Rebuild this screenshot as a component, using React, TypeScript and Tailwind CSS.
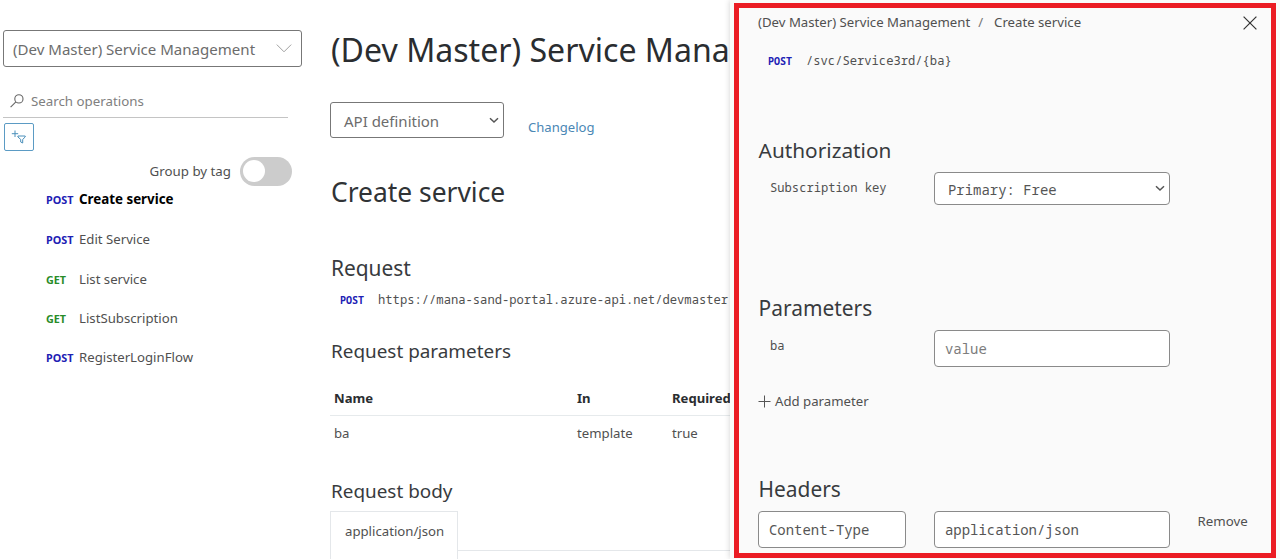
import type { ReactNode } from 'react';

type Method = 'POST' | 'GET';

const operations: { method: Method; name: string; active?: boolean }[] = [
  { method: 'POST', name: 'Create service', active: true },
  { method: 'POST', name: 'Edit Service' },
  { method: 'GET', name: 'List service' },
  { method: 'GET', name: 'ListSubscription' },
  { method: 'POST', name: 'RegisterLoginFlow' },
];

const mono = "font-['Noto_Sans_Mono','DejaVu_Sans_Mono',monospace]";

function SmallChevron({ className }: { className: string }) {
  return (
    <svg viewBox="0 0 10 7" className={className} fill="none" stroke="#555" strokeWidth="1.5">
      <path d="M1 1.3 L5 5 L9 1.3" />
    </svg>
  );
}

function MonoBadge() {
  return <span className="w-[38px] shrink-0 text-[10px] font-bold text-[#2020b4]">POST</span>;
}

function Field({ className, children }: { className: string; children: ReactNode }) {
  return (
    <div className={`flex shrink-0 items-center rounded-[4px] border border-[#8a8a8a] bg-white text-[13.95px] leading-[20px] text-[#555] ${mono} ${className}`}>
      {children}
    </div>
  );
}

function Sidebar() {
  return (
    <aside className="flex h-full w-[330px] shrink-0 flex-col pl-[3px] pt-[30px]">
      <div className="flex h-[37px] w-[299px] items-center justify-between rounded-[3px] border border-[#777] pl-[9px] pr-[9px] text-[15.05px] text-[#6c6c6c]">
        <span className="whitespace-nowrap pt-px">(Dev Master) Service Management</span>
        <svg viewBox="0 0 16 9" className="h-[9px] w-4" fill="none" stroke="#a0a0a0" strokeWidth="1">
          <path d="M0.8 0.6 L8 7.8 L15.2 0.6" />
        </svg>
      </div>

      <div className="mt-[17px] flex h-[34px] w-[285px] items-center border-b border-[#c4c4c4] pl-[7px] text-[13.3px] text-[#808080]">
        <svg viewBox="0 0 14 14" className="h-[14px] w-[14px]" fill="none" stroke="#666" strokeWidth="1.1">
          <circle cx="8.9" cy="4.9" r="4.1" />
          <path d="M5.9 7.9 L0.6 13.2" />
        </svg>
        <span className="ml-[7px] pt-[2px]">Search operations</span>
      </div>

      <div className="ml-px mt-[5px] flex h-[28px] w-[30px] items-center justify-center rounded-[2px] border border-[#5b9bc4]">
        <svg viewBox="0 0 16 16" className="h-4 w-4" fill="none" stroke="#4a8fba" strokeWidth="1">
          <path d="M4 1.5 V8 M0.8 4.7 H7.2" />
          <path d="M6.9 7 H14.2 V8 L11.7 10.4 V14 L9.7 13 V10.4 L6.9 8 Z" />
        </svg>
      </div>

      <div className="mt-[5px] flex h-[30px] w-[289px] items-center justify-end text-[13.3px] text-[#505050]">
        <span className="pt-px">Group by tag</span>
        <div className="ml-[9px] flex h-[29px] w-[52px] items-center rounded-full bg-[#ccc] pl-[3px]">
          <div className="h-[22px] w-[22px] rounded-full bg-white" />
        </div>
      </div>

      <ul className="-mt-[7px] pl-[43px]">
        {operations.map((op) => (
          <li key={op.name} className="flex h-[39.2px] items-baseline text-[13.2px] leading-[40px] first:h-[40.4px]">
            <span className={`w-[33px] text-[10.8px] font-bold ${op.method === 'POST' ? 'text-[#2020b4]' : 'text-[#288c28]'}`}>{op.method}</span>
            <span className={op.active ? 'text-[13.35px] font-bold text-black' : 'text-[#505050]'}>{op.name}</span>
          </li>
        ))}
      </ul>
    </aside>
  );
}

function Main() {
  return (
    <main className="flex h-full w-[400px] shrink-0 flex-col overflow-hidden whitespace-nowrap">
      <h1 className="ml-px mt-[30px] text-[32.1px] leading-[40px] text-[#2a2d30]">(Dev Master) Service Mana</h1>

      <div className="mt-[32px] flex h-[36px]">
        <div className="flex h-[36px] w-[174px] items-center justify-between rounded-[3px] border border-[#777] pl-[13px] pr-[4px] text-[15px] text-[#6c6c6c]">
          <span className="pt-[3px]">API definition</span>
          <SmallChevron className="h-[7px] w-[10px]" />
        </div>
        <span className="ml-[24px] pt-[15px] text-[13.1px] leading-[20px] text-[#4a87b5]">Changelog</span>
      </div>

      <h2 className="ml-px mt-[34px] text-[26.4px] leading-[40px] text-[#303336]">Create service</h2>
      <h3 className="ml-px mt-[41px] text-[20.9px] leading-[30px] text-[#383b3e]">Request</h3>
      <div className={`mt-[7px] flex items-baseline pl-[10px] text-[12.17px] leading-[20px] text-[#505050] ${mono}`}>
        <MonoBadge />
        <span>https://mana-sand-portal.azure-api.net/devmaster</span>
      </div>
      <h4 className="ml-px mt-[26px] text-[18.9px] leading-[30px] text-[#383b3e]">Request parameters</h4>

      <table className="mt-[15px] w-[400px] table-fixed text-left text-[13.2px] leading-[20px] text-[#505050]">
        <colgroup>
          <col className="w-[243px]" />
          <col className="w-[95px]" />
          <col className="w-[62px]" />
        </colgroup>
        <thead className="border-b border-[#e6eaec] text-[13.1px] text-[#2a2d30]">
          <tr className="h-[34px] align-middle font-bold">
            <th className="pl-[4px]">Name</th>
            <th className="pl-[4px]">In</th>
            <th className="pl-[4px]">Required</th>
          </tr>
        </thead>
        <tbody>
          <tr className="h-[36px] align-middle">
            <td className="pl-[4px]">ba</td>
            <td className="pl-[4px]">template</td>
            <td className="pl-[4px]">true</td>
          </tr>
        </tbody>
      </table>

      <h4 className="ml-px mt-[25px] text-[18.9px] leading-[30px] text-[#383b3e]">Request body</h4>
      <div className="mt-[5px] flex h-[49px]">
        <div className="h-[49px] w-[128px] border border-b-0 border-[#e4e7ea] pl-[14px] pt-[9px] text-[13.2px] leading-[20px] text-[#505050]">
          application/json
        </div>
        <div className="h-[40px] flex-1 border-b border-[#e4e7ea]" />
      </div>
    </main>
  );
}

function Console() {
  return (
    <section className="h-full w-[550px] shrink-0 bg-[#fafafa] pb-px pl-[4px] pr-[4px] pt-[3px] shadow-[0_0_6px_rgba(0,0,0,0.18)]">
      <div className="flex h-[555px] flex-col whitespace-nowrap border-[5px] border-[#eb1c24] pl-[19px]">
        <div className="mt-[4px] flex h-[20px] items-center text-[13.2px] leading-[20px] text-[#505050]">
          <span>(Dev Master) Service Management</span>
          <span className="ml-[8px] text-[#777]">/</span>
          <span className="ml-[11px]">Create service</span>
          <svg viewBox="0 0 14 14" className="ml-auto mr-[14px] mt-[2px] h-[14px] w-[14px]" fill="none" stroke="#333" strokeWidth="1.2">
            <path d="M0.6 0.6 L13.4 13.4 M13.4 0.6 L0.6 13.4" />
          </svg>
        </div>

        <div className={`mt-[19px] flex items-baseline pl-[10px] text-[12.15px] leading-[20px] text-[#505050] ${mono}`}>
          <MonoBadge />
          <span>/svc/Service3rd/{'{ba}'}</span>
        </div>

        <h3 className="mt-[64px] pl-[0.6px] text-[20.8px] leading-[30px] text-[#383b3e]">Authorization</h3>
        <div className="mt-[7px] flex h-[33px]">
          <span className={`w-[176px] pl-[12px] pt-[6px] text-[12.15px] leading-[20px] text-[#505050] ${mono}`}>Subscription key</span>
          <Field className="h-[33px] w-[236px] justify-between pl-[13px] pr-[4px]">
            <span className="pt-[3px]">Primary: Free</span>
            <SmallChevron className="h-[7px] w-[10px]" />
          </Field>
        </div>

        <h3 className="mt-[88px] pl-[0.6px] text-[20.9px] leading-[30px] text-[#383b3e]">Parameters</h3>
        <div className="mt-[7px] flex h-[37px]">
          <span className={`w-[176px] pl-[12px] pt-[6px] text-[12.15px] leading-[20px] text-[#505050] ${mono}`}>ba</span>
          <Field className="h-[37px] w-[236px] pl-[10px]">
            <span className="pt-px text-[#7c7c7c]">value</span>
          </Field>
        </div>

        <div className="mt-[24px] flex h-[20px] items-center text-[13.2px] leading-[20px] text-[#505050]">
          <svg viewBox="0 0 13 13" className="h-[13px] w-[13px]" fill="none" stroke="#555" strokeWidth="1">
            <path d="M6.5 0.5 V12.5 M0.5 6.5 H12.5" />
          </svg>
          <span className="ml-[4px]">Add parameter</span>
        </div>

        <h3 className="mt-[63px] pl-[0.6px] text-[20.9px] leading-[30px] text-[#383b3e]">Headers</h3>
        <div className="mt-[7px] flex h-[37px]">
          <Field className="h-[37px] w-[148px] pl-[10px]">
            <span className="pt-px">Content-Type</span>
          </Field>
          <Field className="ml-[28px] h-[37px] w-[236px] pl-[10px]">
            <span className="pt-px">application/json</span>
          </Field>
          <span className="ml-[27px] pl-[0.5px] text-[13.3px] leading-[20px] text-[#505050]">Remove</span>
        </div>
      </div>
    </section>
  );
}

export default function App() {
  return (
    <div className="flex h-[559px] w-[1280px] overflow-hidden bg-white font-['Noto_Sans','Open_Sans',sans-serif]">
      <Sidebar />
      <Main />
      <Console />
    </div>
  );
}
